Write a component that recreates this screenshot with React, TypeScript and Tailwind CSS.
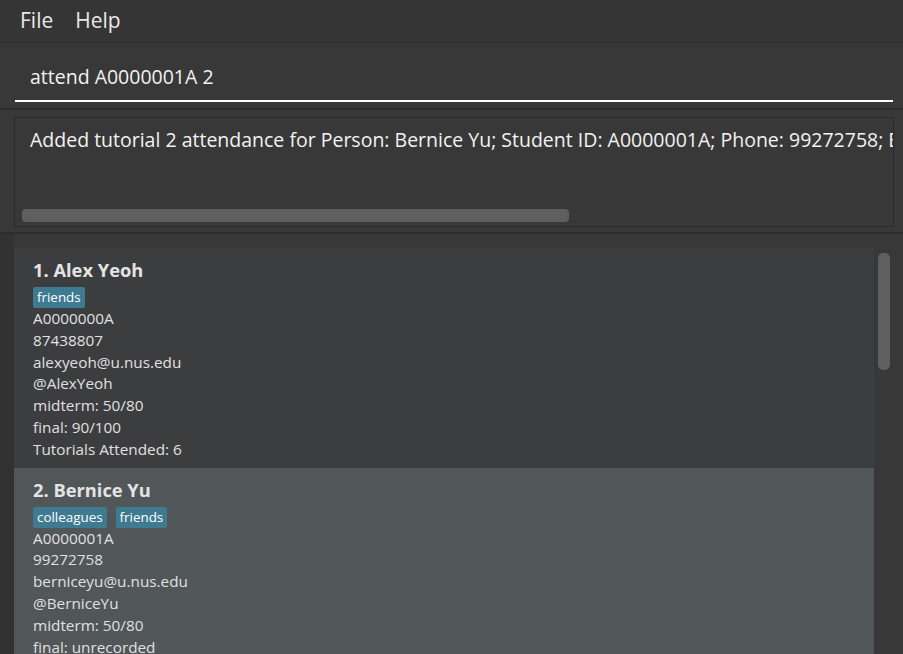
import React from 'react';

interface Person {
  name: string;
  tags: string[];
  id: string;
  phone: string;
  email: string;
  tele: string;
  midterm: string;
  final: string;
  tutorials?: string;
}

const persons: Person[] = [
  {
    name: 'Alex Yeoh',
    tags: ['friends'],
    id: 'A0000000A',
    phone: '87438807',
    email: 'alexyeoh@u.nus.edu',
    tele: '@AlexYeoh',
    midterm: 'midterm: 50/80',
    final: 'final: 90/100',
    tutorials: 'Tutorials Attended: 6',
  },
  {
    name: 'Bernice Yu',
    tags: ['colleagues', 'friends'],
    id: 'A0000001A',
    phone: '99272758',
    email: 'berniceyu@u.nus.edu',
    tele: '@BerniceYu',
    midterm: 'midterm: 50/80',
    final: 'final: unrecorded',
    tutorials: 'Tutorials Attended: 2',
  },
];

const font = { fontFamily: '"Open Sans", "Noto Sans", sans-serif' };

function PersonCard({ person, index, selected }: { person: Person; index: number; selected: boolean }) {
  return (
    <div className={`${selected ? 'bg-[#515658]' : 'bg-[#3c3d3f]'} pl-[19px] pt-[10px] pb-[7px] shrink-0`}>
      <div className="text-[18.3px] font-bold leading-[24px] text-[#e4e4e4]">
        {index}. {person.name}
      </div>
      <div className="flex gap-[9px] mt-[5px]">
        {person.tags.map((t) => (
          <span key={t} className="bg-[#3e7b91] text-white text-[13.4px] leading-[21px] px-[4px] rounded-[2px]">
            {t}
          </span>
        ))}
      </div>
      <div className="text-[15.3px] leading-[21.8px] text-[#e0e0e0]">
        <div>{person.id}</div>
        <div>{person.phone}</div>
        <div>{person.email}</div>
        <div>{person.tele}</div>
        <div>{person.midterm}</div>
        <div>{person.final}</div>
        {person.tutorials && <div>{person.tutorials}</div>}
      </div>
    </div>
  );
}

export default function App() {
  return (
    <div className="w-[903px] h-[654px] overflow-hidden flex flex-col bg-[#383838]" style={font}>
      {/* menu bar */}
      <div className="h-[43px] shrink-0 flex items-center gap-[22px] pl-[20px] bg-[#353535] text-[21px] text-[#e8e8e8] border-b border-[#2b2b2b]">
        <span>File</span>
        <span>Help</span>
      </div>

      {/* command box */}
      <div className="h-[67px] shrink-0 bg-[#383838] pl-[15px] pr-[10px] pt-[19px] border-b-2 border-[#2d2d2d]">
        <div className="h-[40px] pl-[15px] border-b-2 border-white text-[19.5px] leading-[30px] text-[#f2f2f2]">
          attend A0000001A 2
        </div>
      </div>

      {/* result display */}
      <div className="h-[124px] shrink-0 bg-[#383838] pt-[7px] pl-[14px] pr-[9px] border-b-2 border-[#2d2d2d]">
        <div className="h-[110px] border border-[#2a2a2a] bg-[#383838] flex flex-col overflow-hidden">
          <div className="pl-[15px] pt-[8px] text-[19.5px] leading-[28px] text-[#f2f2f2] whitespace-nowrap">
            Added tutorial 2 attendance for Person: Bernice Yu; Student ID: A0000001A; Phone: 99272758; Email: berniceyu@u.nus.edu
          </div>
          <div className="mt-auto mb-[4px] ml-[7px] w-[547px] h-[13px] rounded-[4px] bg-[#5f5f5f]" />
        </div>
      </div>

      {/* person list */}
      <div className="flex-1 flex min-h-0">
        <div className="w-[14px] shrink-0 bg-[#323232]" />
        <div className="flex-1 flex flex-col pt-[14px] overflow-hidden">
          {persons.map((p, i) => (
            <PersonCard key={p.id} person={p} index={i + 1} selected={i === 1} />
          ))}
        </div>
        <div className="w-[29px] shrink-0 pt-[19px] pl-[4px]">
          <div className="w-[12px] h-[117px] rounded-[5px] bg-[#5f5f5f]" />
        </div>
      </div>
    </div>
  );
}
